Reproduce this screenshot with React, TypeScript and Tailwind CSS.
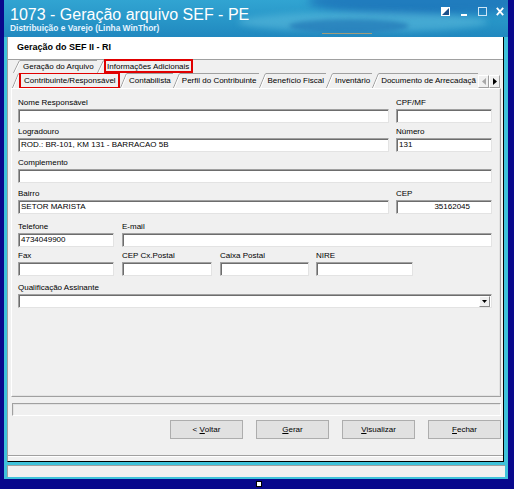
import React from "react";

type SlantProps = { h: number };

// diagonal edge drawn on the left of each page-control tab
const Slant = ({ h }: SlantProps) => (
  <svg width="7" height={h} viewBox={`0 0 7 ${h}`} className="block shrink-0">
    <path d={`M0.5 ${h} L6.5 0.5`} stroke="#9c9c9c" fill="none" />
    <path d={`M1.6 ${h} L7 1.8`} stroke="#ffffff" fill="none" />
  </svg>
);

const Tab = ({ label }: { label: string }) => (
  <div className="flex shrink-0">
    <Slant h={15} />
    <span className="border-t border-[#a0a0a0] px-[2px] pt-[1px] text-[8px] leading-[12px] whitespace-nowrap">
      {label}
    </span>
  </div>
);

type FieldProps = {
  label: string;
  value?: string;
  className: string;
  inputClassName?: string;
};

const Field = ({ label, value = "", className, inputClassName = "" }: FieldProps) => (
  <div className={`flex flex-col ${className}`}>
    <span className="h-[12px] text-[8px] leading-[12px] whitespace-nowrap">{label}</span>
    <div
      className={`h-[14px] overflow-hidden whitespace-nowrap border border-t-[#a0a0a0] border-l-[#a0a0a0] border-r-[#e3e3e3] border-b-[#e3e3e3] bg-white px-[2px] text-[8px] leading-[12px] shadow-[inset_1px_1px_0_#6d6d6d] ${inputClassName}`}
    >
      {value}
    </div>
  </div>
);

const Button = ({ children }: { children: React.ReactNode }) => (
  <div className="flex h-[19px] w-[73px] items-center justify-center border border-[#adadad] bg-[#e1e1e1] text-[8px] leading-[10px] whitespace-pre">
    {children}
  </div>
);

export default function App() {
  return (
    <div className="relative h-[489px] w-[514px] overflow-hidden bg-[#08088c] pb-[10px] pl-[4px] pr-[6px] font-['Liberation_Sans',Arial,sans-serif] text-black">
      <div className="flex h-full flex-col bg-[#3fc2da]">
        {/* title bar */}
        <div className="relative flex h-[37px] shrink-0 overflow-hidden bg-[linear-gradient(180deg,#31a4d2_0%,#2896c8_55%,#2088bf_100%)]">
          <div className="absolute right-[-30px] top-[-14px] h-[30px] w-[230px] rounded-[50%] bg-[#1562b0]/60 blur-[4px]" />
          <div className="absolute right-[20px] top-[12px] h-[20px] w-[250px] rounded-[50%] bg-[#7fd4ec]/35 blur-[3px]" />
          <div className="absolute left-[285px] top-[19px] h-[14px] w-[120px] rounded-[50%] bg-[#1d6fb3]/60 blur-[2px]" />
          <div className="absolute left-[318px] top-[33px] h-[1px] w-[50px] bg-[#d9a45a]/70" />
          <div className="relative flex flex-col pl-[6px] pt-[7px]">
            <span className="text-[16px] leading-[16px] text-white whitespace-nowrap">
              1073 - Geração arquivo SEF - PE
            </span>
            <span className="text-[8.4px] font-bold leading-[10px] text-[#e4f4ff] whitespace-nowrap">
              Distribuição e Varejo (Linha WinThor)
            </span>
          </div>
          <div className="relative ml-auto flex items-start gap-[9px] pr-[4px] pt-[7px]">
            <svg width="9" height="9" viewBox="0 0 9 9" className="block">
              <rect x="0" y="0" width="9" height="9" fill="#ffffff" />
              <path d="M1 8 L8 1 L8 8 Z" fill="#1b4f8a" />
            </svg>
            <svg width="8" height="9" viewBox="0 0 8 9" className="ml-[1px] block">
              <rect x="1" y="7" width="6" height="2" fill="#ffffff" />
            </svg>
            <svg width="9" height="9" viewBox="0 0 9 9" className="ml-[1px] block">
              <rect x="0.5" y="0.5" width="8" height="8" fill="none" stroke="#cfe6f6" />
            </svg>
            <svg width="8" height="9" viewBox="0 0 8 9" className="block">
              <path d="M0.8 0.8 L7.2 8.2 M7.2 0.8 L0.8 8.2" stroke="#ffffff" strokeWidth="1.8" />
            </svg>
          </div>
        </div>

        {/* window body */}
        <div className="ml-[3px] mr-[4px] flex flex-1 flex-col border-b border-l border-r border-b-black border-l-[#a0a0a0] border-r-black bg-[#f0f0f0]">
          <div className="h-[23px] shrink-0 border-b border-[#a0a0a0] bg-white pl-[9px] pt-[5px] text-[9px] font-bold leading-[11px]">
            Geração do SEF II - RI
          </div>

          {/* first tab row */}
          <div className="flex h-[13px] shrink-0 pl-[5px]">
            <div className="flex shrink-0">
              <Slant h={13} />
              <span className="border-t border-[#a0a0a0] px-[3px] text-[8px] leading-[12px] whitespace-nowrap">
                Geração do Arquivo
              </span>
            </div>
            <Slant h={13} />
            <span className="-mt-[1px] h-[14px] w-[89px] border-2 border-[#e00000] text-center text-[8px] leading-[11px] whitespace-nowrap">
              Informações Adicionais
            </span>
          </div>

          {/* second tab row */}
          <div className="flex h-[15px] shrink-0 pl-[4px] pr-[3px]">
            <div className="flex flex-1 overflow-hidden">
              <Slant h={15} />
              <span className="-my-[1px] h-[17px] w-[101px] shrink-0 border-2 border-[#e00000] pl-[3px] pt-[1px] text-[8px] leading-[12px] whitespace-nowrap">
                Contribuinte/Responsável
              </span>
              <Tab label="Contabilista" />
              <Tab label="Perfil do Contribuinte" />
              <Tab label="Benefício Fiscal" />
              <Tab label="Inventário" />
              <Tab label="Documento de Arrecadaçã" />
            </div>
            <div className="flex items-center pt-[1px]">
              <div className="flex h-[13px] w-[11px] items-center justify-center border border-b-[#a0a0a0] border-l-white border-r-[#a0a0a0] border-t-white bg-[#f0f0f0]">
                <svg width="4" height="7" viewBox="0 0 4 7" className="block">
                  <path d="M4 0 L0 3.5 L4 7 Z" fill="#a8a8a8" />
                </svg>
              </div>
              <div className="flex h-[13px] w-[11px] items-center justify-center border border-b-[#a0a0a0] border-l-white border-r-[#a0a0a0] border-t-white bg-[#f0f0f0]">
                <svg width="4" height="7" viewBox="0 0 4 7" className="block">
                  <path d="M0 0 L4 3.5 L0 7 Z" fill="#000000" />
                </svg>
              </div>
            </div>
          </div>

          {/* contribuinte page */}
          <div className="ml-[3px] h-[309px] w-[490px] shrink-0 border border-b-[#a0a0a0] border-l-white border-r-[#a0a0a0] border-t-white pl-[6px] pt-[8px] shadow-[inset_-1px_-1px_0_#e3e3e3]">
            <div className="flex gap-[7px]">
              <Field label="Nome Responsável" className="w-[371px]" />
              <Field label="CPF/MF" className="w-[96px]" />
            </div>
            <div className="mt-[3px] flex gap-[7px]">
              <Field label="Logradouro" value="ROD.: BR-101, KM 131 - BARRACAO 5B" className="w-[371px]" />
              <Field label="Número" value="131" className="w-[96px]" />
            </div>
            <div className="mt-[5px] flex">
              <Field label="Complemento" className="w-[474px]" />
            </div>
            <div className="mt-[5px] flex gap-[7px]">
              <Field label="Bairro" value="SETOR MARISTA" className="w-[371px]" />
              <Field label="CEP" value="35162045" className="w-[96px]" inputClassName="text-right pr-[21px]" />
            </div>
            <div className="mt-[7px] flex gap-[8px]">
              <Field label="Telefone" value="4734049900" className="w-[96px]" />
              <Field label="E-mail" className="w-[370px]" />
            </div>
            <div className="mt-[3px] flex">
              <Field label="Fax" className="w-[96px]" />
              <Field label="CEP Cx.Postal" className="ml-[8px] w-[90px]" />
              <Field label="Caixa Postal" className="ml-[8px] w-[89px]" />
              <Field label="NIRE" className="ml-[7px] w-[97px]" />
            </div>
            <div className="mt-[6px] flex w-[474px] flex-col">
              <span className="h-[12px] text-[8px] leading-[12px]">Qualificação Assinante</span>
              <div className="flex h-[14px] items-center justify-end border border-b-[#e3e3e3] border-l-[#a0a0a0] border-r-[#e3e3e3] border-t-[#a0a0a0] bg-white pr-[1px] shadow-[inset_1px_1px_0_#6d6d6d]">
                <div className="flex h-[11px] w-[11px] items-center justify-center border border-b-[#8a8a8a] border-l-white border-r-[#8a8a8a] border-t-white bg-[#f0f0f0]">
                  <svg width="5" height="3" viewBox="0 0 5 3" className="block">
                    <path d="M0 0 L5 0 L2.5 3 Z" fill="#000000" />
                  </svg>
                </div>
              </div>
            </div>
          </div>

          {/* progress bar */}
          <div className="ml-[4px] mt-[6px] h-[13px] w-[489px] shrink-0 border border-b-white border-l-[#a0a0a0] border-r-white border-t-[#a0a0a0] bg-[#f0f0f0] shadow-[inset_1px_1px_0_#e3e3e3]" />

          {/* actions */}
          <div className="mt-[4px] flex shrink-0 justify-end gap-[13px] pr-[2px]">
            <Button>
              {"< "}
              <span className="underline">V</span>oltar
            </Button>
            <Button>
              <span className="underline">G</span>erar
            </Button>
            <Button>
              <span className="underline">V</span>isualizar
            </Button>
            <Button>
              <span className="underline">F</span>echar
            </Button>
          </div>

          <div className="mt-[16px] h-[2px] shrink-0 border-b border-t border-b-white border-t-[#a0a0a0]" />
          <div className="flex-1" />
        </div>

        {/* status bar */}
        <div className="mx-[3px] mb-[2px] mt-[3px] h-[12px] shrink-0 border-l border-t border-[#a0a0a0] bg-[#f0f0f0]" />
      </div>

      {/* selection handle */}
      <div className="absolute left-[256px] top-[481px] h-[6px] w-[6px] border border-black bg-white" />
    </div>
  );
}
